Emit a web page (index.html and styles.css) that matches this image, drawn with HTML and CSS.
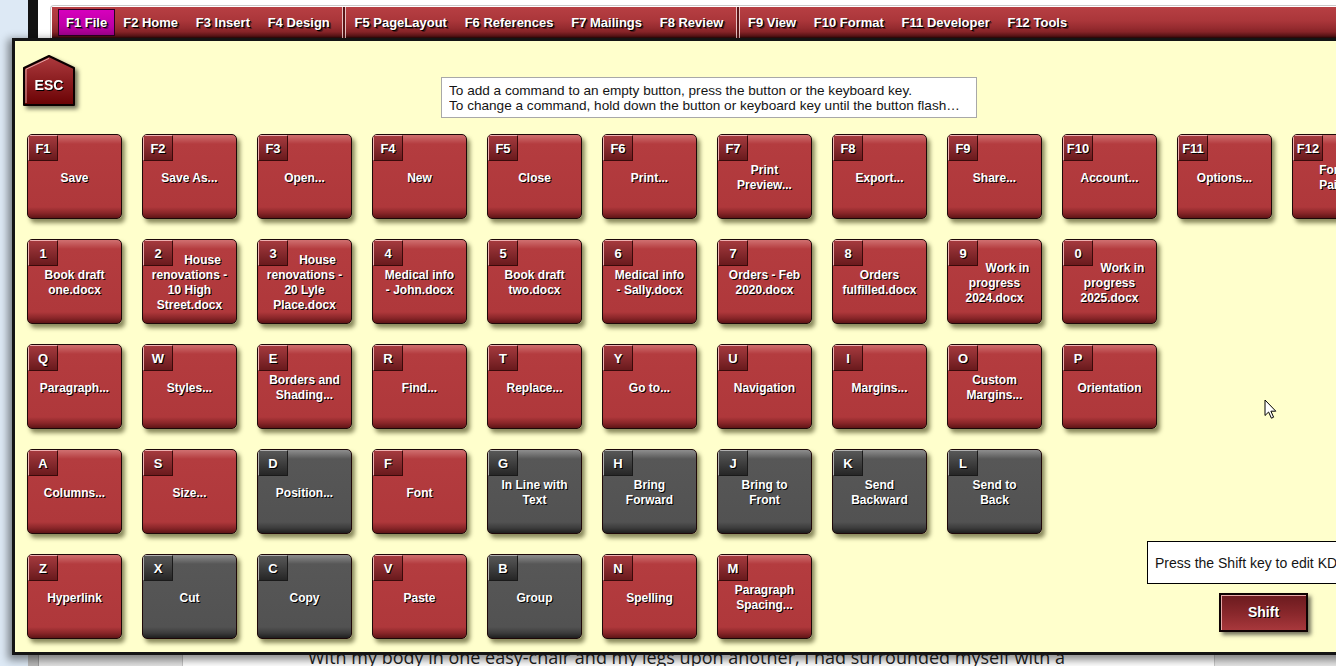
FILE: index.html
```html
<!DOCTYPE html>
<html lang="en">
<head>
<meta charset="utf-8">
<title>Keyboard Shortcuts - File</title>
<link rel="stylesheet" href="styles.css">
</head>
<body>
<div class="screen">
  <div class="desk"></div>
  <div class="edge"></div>
  <div class="app">
    <div class="ribbon-wrap">
      <nav class="menubar">
        <span class="tab active">F1 File</span>
        <span class="tab">F2 Home</span>
        <span class="tab">F3 Insert</span>
        <span class="tab">F4 Design</span>
        <span class="sep"></span>
        <span class="tab">F5 PageLayout</span>
        <span class="tab">F6 References</span>
        <span class="tab">F7 Mailings</span>
        <span class="tab">F8 Review</span>
        <span class="sep"></span>
        <span class="tab">F9 View</span>
        <span class="tab">F10 Format</span>
        <span class="tab">F11 Developer</span>
        <span class="tab">F12 Tools</span>
      </nav>
    </div>
    <div class="doc">
      <div class="nav"></div>
      <div class="page"><p>With my body in one easy-chair and my legs upon another, I had surrounded myself with a</p></div>
      <div class="side"></div>
    </div>
  </div>

  <div class="panel">
    <div class="panel-head">
      <svg class="esc" width="52" height="52" viewBox="0 0 52 52">
        <defs>
          <linearGradient id="escg" x1="0" y1="0" x2="0" y2="1">
            <stop offset="0" stop-color="#ad3a3e"/>
            <stop offset="1" stop-color="#6a0204"/>
          </linearGradient>
        </defs>
        <polygon points="1,13 26,1 51,13 51,50 1,50" fill="url(#escg)" stroke="#0c0000" stroke-width="2" stroke-linejoin="round"/>
        <polyline points="3,48 3,14.2 26,3.4" fill="none" stroke="#e6a6a6" stroke-width="1"/>
        <text class="esc-text" x="26" y="35" text-anchor="middle">ESC</text>
      </svg>
      <div class="tip">
        <div class="tip-line">To add a command to an empty button, press the button or the keyboard key.</div>
        <div class="tip-line">To change a command, hold down the button or keyboard key until the button flashes.</div>
      </div>
    </div>

    <div class="keys">
      <div class="key red first"><span class="k">F1</span><p class="t n1">Save</p></div>
      <div class="key red"><span class="k">F2</span><p class="t n1">Save As...</p></div>
      <div class="key red"><span class="k">F3</span><p class="t n1">Open...</p></div>
      <div class="key red"><span class="k">F4</span><p class="t n1">New</p></div>
      <div class="key red"><span class="k">F5</span><p class="t n1">Close</p></div>
      <div class="key red"><span class="k">F6</span><p class="t n1">Print...</p></div>
      <div class="key red"><span class="k">F7</span><p class="t n2">Print<br>Preview...</p></div>
      <div class="key red"><span class="k">F8</span><p class="t n1">Export...</p></div>
      <div class="key red"><span class="k">F9</span><p class="t n1">Share...</p></div>
      <div class="key red"><span class="k">F10</span><p class="t n1">Account...</p></div>
      <div class="key red"><span class="k">F11</span><p class="t n1">Options...</p></div>
      <div class="key red"><span class="k">F12</span><p class="t n2">Format<br>Painter</p></div>

      <div class="key red first"><span class="k">1</span><p class="t n2">Book draft<br>one.docx</p></div>
      <div class="key red"><span class="k">2</span><p class="t n4">House<br>renovations -<br>10 High<br>Street.docx</p></div>
      <div class="key red"><span class="k">3</span><p class="t n4">House<br>renovations -<br>20 Lyle<br>Place.docx</p></div>
      <div class="key red"><span class="k">4</span><p class="t n2">Medical info<br>- John.docx</p></div>
      <div class="key red"><span class="k">5</span><p class="t n2">Book draft<br>two.docx</p></div>
      <div class="key red"><span class="k">6</span><p class="t n2">Medical info<br>- Sally.docx</p></div>
      <div class="key red"><span class="k">7</span><p class="t n2">Orders - Feb<br>2020.docx</p></div>
      <div class="key red"><span class="k">8</span><p class="t n2">Orders<br>fulfilled.docx</p></div>
      <div class="key red"><span class="k">9</span><p class="t n3">Work in<br>progress<br>2024.docx</p></div>
      <div class="key red"><span class="k">0</span><p class="t n3">Work in<br>progress<br>2025.docx</p></div>

      <div class="key red first"><span class="k">Q</span><p class="t n1">Paragraph...</p></div>
      <div class="key red"><span class="k">W</span><p class="t n1">Styles...</p></div>
      <div class="key red"><span class="k">E</span><p class="t n2">Borders and<br>Shading...</p></div>
      <div class="key red"><span class="k">R</span><p class="t n1">Find...</p></div>
      <div class="key red"><span class="k">T</span><p class="t n1">Replace...</p></div>
      <div class="key red"><span class="k">Y</span><p class="t n1">Go to...</p></div>
      <div class="key red"><span class="k">U</span><p class="t n1">Navigation</p></div>
      <div class="key red"><span class="k">I</span><p class="t n1">Margins...</p></div>
      <div class="key red"><span class="k">O</span><p class="t n2">Custom<br>Margins...</p></div>
      <div class="key red"><span class="k">P</span><p class="t n1">Orientation</p></div>

      <div class="key red first"><span class="k">A</span><p class="t n1">Columns...</p></div>
      <div class="key red"><span class="k">S</span><p class="t n1">Size...</p></div>
      <div class="key grey"><span class="k">D</span><p class="t n1">Position...</p></div>
      <div class="key red"><span class="k">F</span><p class="t n1">Font</p></div>
      <div class="key grey"><span class="k">G</span><p class="t n2">In Line with<br>Text</p></div>
      <div class="key grey"><span class="k">H</span><p class="t n2">Bring<br>Forward</p></div>
      <div class="key grey"><span class="k">J</span><p class="t n2">Bring to<br>Front</p></div>
      <div class="key grey"><span class="k">K</span><p class="t n2">Send<br>Backward</p></div>
      <div class="key grey"><span class="k">L</span><p class="t n2">Send to<br>Back</p></div>

      <div class="key red first"><span class="k">Z</span><p class="t n1">Hyperlink</p></div>
      <div class="key grey"><span class="k">X</span><p class="t n1">Cut</p></div>
      <div class="key grey"><span class="k">C</span><p class="t n1">Copy</p></div>
      <div class="key red"><span class="k">V</span><p class="t n1">Paste</p></div>
      <div class="key grey"><span class="k">B</span><p class="t n1">Group</p></div>
      <div class="key red"><span class="k">N</span><p class="t n1">Spelling</p></div>
      <div class="key red"><span class="k">M</span><p class="t n2">Paragraph<br>Spacing...</p></div>

      <div class="shift-area">
        <div class="shift-info">Press the Shift key to edit KDD settings.</div>
        <div class="shift-btn">Shift</div>
      </div>
    </div>

    <svg class="cursor" width="14" height="21" viewBox="0 0 14 21">
      <path d="M1 1 L1 16.5 L4.6 13 L7.4 19.2 L9.6 18.2 L6.9 12.2 L11.8 12.2 Z" fill="#fff" stroke="#000" stroke-width="1" stroke-linejoin="miter"/>
    </svg>
  </div>
</div>
</body>
</html>
```

FILE: styles.css
```css
* { box-sizing: border-box; }

html, body {
  margin: 0;
  padding: 0;
  width: 1336px;
  height: 666px;
  overflow: hidden;
  font-family: "Liberation Sans", Arial, sans-serif;
}

.screen {
  position: relative;
  display: flex;
  width: 1336px;
  height: 666px;
  overflow: hidden;
  background: #fff;
}

.desk {
  width: 28px;
  flex: none;
  background: #dde9f5;
}

.edge {
  width: 10px;
  flex: none;
  background: linear-gradient(to bottom, #121212 0, #121212 60px, #b9b9b9 600px);
}

.app {
  flex: 1;
  display: flex;
  flex-direction: column;
  background: #fff;
  min-width: 0;
}

.ribbon-wrap {
  margin: 5px 0 0 12px;
  border: 1px solid #c9c9c9;
  border-right: none;
  border-bottom: none;
  border-radius: 4px 0 0 0;
  padding: 1px 0 0 1px;
  background: #fff;
}

.menubar {
  height: 31px;
  display: flex;
  align-items: center;
  padding-left: 6px;
  background: linear-gradient(to bottom, #b73f43 0%, #aa363a 45%, #8a2529 80%, #5e1416 94%, #2a0707 100%);
}

.tab {
  height: 27px;
  line-height: 25px;
  padding: 0 7px;
  margin-right: 1.7px;
  border: 1px solid transparent;
  font-weight: bold;
  font-size: 13px;
  color: #fff;
  text-shadow: 1px 1px 0 #000, 2px 2px 0 rgba(0,0,0,0.4);
  white-space: nowrap;
}

.tab.active {
  background: linear-gradient(to bottom, #d600bd 0%, #c000a8 60%, #a0008c 100%);
  border-color: #2a0022;
  margin-right: 0;
}

.sep {
  align-self: stretch;
  width: 4px;
  margin-left: 3px;
  border-left: 1px solid #e9c2c2;
  border-right: 1px solid #e9c2c2;
  background: #5a1416;
}

.doc {
  flex: 1;
  display: flex;
  min-height: 0;
}

.nav {
  width: 145px;
  flex: none;
  border-left: 1px solid #9c9c9c;
  border-right: 1px solid #c4c4c4;
  background: linear-gradient(to bottom, #f5f5f5, #e2e2e2);
}

.page {
  flex: 1;
  min-width: 0;
  overflow: hidden;
  padding: 607px 0 0 125px;
}

.page p {
  margin: 0;
  font-family: "Open Sans", "Noto Sans", sans-serif;
  font-size: 18px;
  line-height: 24px;
  color: #1e1e1e;
  white-space: nowrap;
}

.side {
  width: 122px;
  flex: none;
  border-left: 1px solid #c8c8c8;
  background: linear-gradient(to bottom, #f4f4f4, #e6e6e6);
}

/* Overlay panel */
.panel {
  position: absolute;
  left: 12px;
  top: 38px;
  width: 1420px;
  height: 617px;
  border: 3px solid #141414;
  border-right: none;
  background: #ffffcc;
  box-shadow: -2px 3px 8px 2px rgba(0, 0, 0, 0.45);
}

.panel-head {
  display: flex;
  align-items: flex-start;
  height: 93px;
}

.esc {
  flex: none;
  margin: 14px 0 0 8px;
  filter: drop-shadow(3px 3px 2px rgba(0, 0, 0, 0.55));
}

.esc-text {
  font-family: "Liberation Sans", Arial, sans-serif;
  font-weight: bold;
  font-size: 14px;
  fill: #fff;
  text-shadow: 1px 1px 0 #000;
}

.tip {
  margin: 36px 0 0 366px;
  width: 536px;
  height: 41px;
  padding: 5px 14px 0 7px;
  border: 1px solid #a8a8a8;
  background: #fff;
  font-size: 13.6px;
  line-height: 15px;
  color: #141414;
}

.tip-line {
  white-space: nowrap;
  overflow: hidden;
  text-overflow: ellipsis;
}

/* Keys grid */
.keys {
  display: grid;
  grid-template-columns: repeat(12, 95px);
  grid-auto-rows: 85px;
  gap: 20px;
  margin-left: 12px;
}

.key {
  position: relative;
  display: flow-root;
  overflow: hidden;
  border: 1px solid #1e0808;
  border-radius: 5px;
  box-shadow: 3px 4px 4px rgba(40, 40, 0, 0.55);
  color: #fff;
}

.key.first { grid-column-start: 1; }

.key.red {
  background: linear-gradient(to bottom, #d07070 0px, #b43c3f 9px, #af383b 72px, #8a2629 78px, #5e1416 83px);
}

.key.grey {
  background: linear-gradient(to bottom, #8e8e8e 0px, #575757 9px, #525252 72px, #3c3c3c 78px, #1e1e1e 83px);
}

.k {
  float: left;
  width: 30px;
  height: 26px;
  line-height: 25px;
  text-align: center;
  font-weight: bold;
  font-size: 13px;
  text-shadow: 1px 1px 0 #000;
  border: 1px solid;
  border-color: #eeb0b0 #3a0a0a #3a0a0a #eeb0b0;
}

.red .k {
  background: linear-gradient(to bottom, #a53a3e, #6a1a1d);
}

.grey .k {
  background: linear-gradient(to bottom, #585858, #262626);
  border-color: #b0b0b0 #1a1a1a #1a1a1a #b0b0b0;
}

.t {
  margin: 0;
  padding: 0 4px;
  text-align: center;
  font-weight: bold;
  font-size: 12px;
  line-height: 15px;
  white-space: nowrap;
  text-shadow: 1px 1px 0 #000;
}

.n1 { padding-top: 36px; }
.n2 { padding-top: 28px; }
.n3 { padding-top: 21px; }
.n4 { padding-top: 13px; }

/* Shift area */
.shift-area {
  grid-column: 10 / span 3;
  grid-row: 4 / span 2;
  display: flex;
  flex-direction: column;
  justify-content: flex-end;
  gap: 9px;
  padding: 0 0 7px 85px;
}

.shift-info {
  height: 43px;
  line-height: 42px;
  padding: 0 7px;
  border: 1px solid #000;
  background: #fff;
  font-size: 14px;
  color: #141414;
  white-space: nowrap;
  overflow: hidden;
}

.shift-btn {
  width: 89px;
  height: 39px;
  margin-left: 72px;
  border: 2px solid #0e0202;
  box-shadow: inset 1px 1px 0 #e8a8a8, 3px 3px 4px rgba(0, 0, 0, 0.55);
  background: linear-gradient(to bottom, #6a1a1e 0%, #8a282c 55%, #a8383c 100%);
  color: #fff;
  font-weight: bold;
  font-size: 14px;
  line-height: 35px;
  text-align: center;
  text-shadow: 1px 1px 0 #000;
}

.cursor {
  position: absolute;
  left: 1249px;
  top: 358px;
}
```
